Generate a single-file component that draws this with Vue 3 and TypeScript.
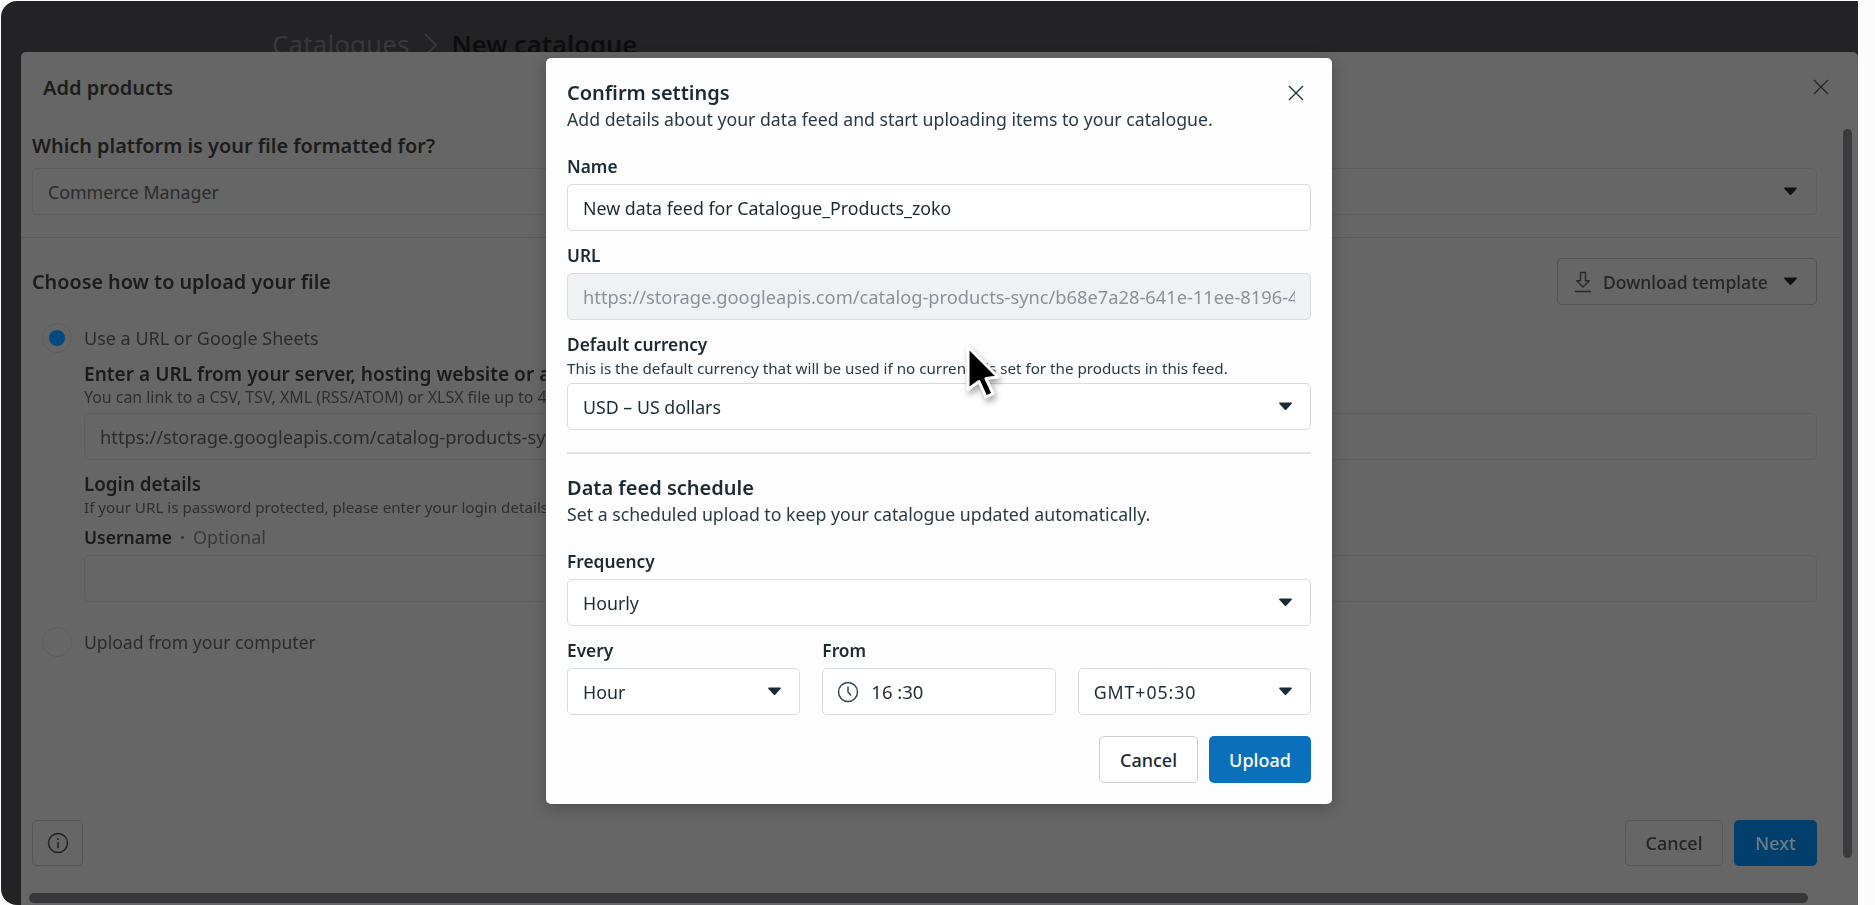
<script setup lang="ts">
const chevron = 'M.9 .6h11.2c.6 0 1 .7.6 1.200L7.200 7.700a1 1 0 0 1-1.400 0L.3 1.800C-.1 1.300.3.600.9.600z'
</script>

<template>
  <div class="page">
    <div class="frame">
      <div class="crumbs">
        <span class="crumb-link">Catalogues</span>
        <svg class="crumb-sep" width="16" height="26" viewBox="0 0 16 26"><path d="M2 2l11 11L2 24" fill="none" stroke="#3c3c3e" stroke-width="1.6" /></svg>
        <span class="crumb-now">New catalogue</span>
      </div>

      <section class="back">
        <div class="back-title">Add products</div>
        <svg class="back-close" width="16" height="16" viewBox="0 0 16 16"><path d="M1 1l14 14M15 1L1 15" stroke="#262626" stroke-width="1.3" fill="none" /></svg>

        <div class="back-body">
          <h2 class="back-h first">Which platform is your file formatted for?</h2>
          <div class="back-input select">
            <span>Commerce Manager</span>
            <svg width="13" height="9" viewBox="0 0 13 9"><path :d="chevron" fill="#111" /></svg>
          </div>
        </div>
        <div class="back-rule"></div>

        <div class="back-body">
          <div class="choose-row">
            <h2 class="back-h">Choose how to upload your file</h2>
            <div class="template-btn">
              <svg width="20" height="22" viewBox="0 0 20 22" fill="none" stroke="#2a2a2a" stroke-width="1.4" stroke-linejoin="round" stroke-linecap="round"><path d="M7.500 1.500h5v8.200h3.800L10 16 3.700 9.700h3.800zM2.500 20.500h15" /></svg>
              <span>Download template</span>
              <svg width="13" height="9" viewBox="0 0 13 9"><path :d="chevron" fill="#111" /></svg>
            </div>
          </div>

          <div class="radio-row">
            <span class="radio"><i></i></span>
            <span>Use a URL or Google Sheets</span>
          </div>

          <div class="indent">
            <div class="back-strong">Enter a URL from your server, hosting website or a Google Sheet</div>
            <div class="back-small wide">You can link to a CSV, TSV, XML (RSS/ATOM) or XLSX file up to 4 GB.</div>
            <div class="back-input url">https://storage.googleapis.com/catalog-products-sync/b68e7a28-641e-11ee-8196-4</div>
            <div class="back-login">Login details</div>
            <div class="back-small">If your URL is password protected, please enter your login details.</div>
            <div class="back-user"><b>Username</b><em>·</em><span>Optional</span></div>
            <div class="back-input url user"></div>
          </div>

          <div class="radio-row second">
            <span class="radio"></span>
            <span>Upload from your computer</span>
          </div>
        </div>

        <div class="back-foot">
          <div class="info-btn">
            <svg width="22" height="22" viewBox="0 0 22 22" fill="none" stroke="#232323" stroke-width="1.5"><circle cx="11" cy="11" r="9.500" /><path d="M11 10v6.200M11 6.200v1.800" /></svg>
          </div>
          <div class="foot-right">
            <div class="back-btn">Cancel</div>
            <div class="back-btn next">Next</div>
          </div>
        </div>

        <div class="bar-v"></div>
        <div class="bar-h"></div>
      </section>

      <section class="modal">
        <svg class="modal-close" width="16" height="16" viewBox="0 0 16 16"><path d="M1 1l14 14M15 1L1 15" stroke="#1c2b33" stroke-width="1.300" fill="none" /></svg>
        <h1 class="m-title">Confirm settings</h1>
        <p class="m-sub">Add details about your data feed and start uploading items to your catalogue.</p>

        <label class="m-label name">Name</label>
        <div class="m-input">New data feed for Catalogue_Products_zoko</div>

        <label class="m-label">URL</label>
        <div class="m-input disabled"><span>https://storage.googleapis.com/catalog-products-sync/b68e7a28-641e-11ee-8196-4</span></div>

        <label class="m-label">Default currency</label>
        <p class="m-help">This is the default currency that will be used if no currency is set for the products in this feed.</p>
        <div class="m-input select">
          <span>USD – US dollars</span>
          <svg width="13" height="9" viewBox="0 0 13 9"><path :d="chevron" fill="#1c2b33" /></svg>
        </div>

        <div class="m-rule"></div>

        <h2 class="m-title schedule">Data feed schedule</h2>
        <p class="m-sub">Set a scheduled upload to keep your catalogue updated automatically.</p>

        <label class="m-label freq">Frequency</label>
        <div class="m-input select">
          <span>Hourly</span>
          <svg width="13" height="9" viewBox="0 0 13 9"><path :d="chevron" fill="#1c2b33" /></svg>
        </div>

        <div class="m-triple">
          <div>
            <label class="m-label flat">Every</label>
            <div class="m-input select">
              <span>Hour</span>
              <svg width="13" height="9" viewBox="0 0 13 9"><path :d="chevron" fill="#1c2b33" /></svg>
            </div>
          </div>
          <div>
            <label class="m-label flat">From</label>
            <div class="m-input time">
              <svg width="22" height="22" viewBox="0 0 22 22" fill="none" stroke="#344854" stroke-width="1.500"><circle cx="11" cy="11" r="9.500" /><path d="M11 5.500V11l3 3.500" /></svg>
              <span>16 :30</span>
            </div>
          </div>
          <div class="tz">
            <div class="m-input select">
              <span class="gmt">GMT+05:30</span>
              <svg width="13" height="9" viewBox="0 0 13 9"><path :d="chevron" fill="#1c2b33" /></svg>
            </div>
          </div>
        </div>

        <div class="m-actions">
          <div class="m-btn">Cancel</div>
          <div class="m-btn primary">Upload</div>
        </div>
      </section>

      <svg class="cursor" width="44" height="58" viewBox="0 0 44 58">
        <path d="M6 3l30 30-12 1.500 7 15-7 3.500-7-15.500-11 8z" fill="#000" stroke="#fff" stroke-width="3" stroke-linejoin="round" />
      </svg>
    </div>
  </div>
</template>

<style>
html, body { margin: 0; background: #fff; }
</style>

<style scoped>
* { box-sizing: border-box; }
.page {
  width: 1875px;
  height: 905px;
  overflow: hidden;
  background: #fcfcfc;
  padding: 1px 0 0 1px;
  font-family: "Noto Sans", "Open Sans", sans-serif;
}
.frame {
  position: relative;
  width: 1857px;
  height: 904px;
  background: #232325;
  border-radius: 16px 0 0 16px;
  overflow: hidden;
}
.crumbs {
  height: 51px;
  overflow: hidden;
  padding: 27px 0 0 271px;
  display: flex;
  align-items: flex-start;
  gap: 13px;
  font-size: 26px;
  line-height: 32px;
  white-space: nowrap;
}
.crumb-link { color: #38383b; letter-spacing: .1px; }
.crumb-sep { margin-top: 4px; }
.crumb-now { color: #0d0d0d; font-weight: 600; font-size: 25.500px; }

.back {
  position: relative;
  margin-left: 20px;
  height: 853px;
  background: #666;
  border-radius: 5px 5px 0 0;
  display: flex;
  flex-direction: column;
  color: #202020;
  font-size: 17.500px;
  filter: blur(.5px);
}
.back-title {
  margin: 24px 0 0 22px;
  font-size: 20px;
  line-height: 24px;
  font-weight: 600;
  color: #1c1c1c;
}
.back-close { position: absolute; left: 1792px; top: 27px; }
.back-body { padding: 0 41px 0 11px; }
.back-h {
  margin: 0;
  font-size: 19.800px;
  line-height: 28px;
  font-weight: 600;
  color: #1c1c1c;
}
.back-h.first { margin-top: 32px; font-size: 19.900px; }
.back-input {
  height: 47px;
  margin-top: 8px;
  border: 1px solid #5e5e5e;
  border-radius: 5px;
  padding: 0 15px;
  display: flex;
  align-items: center;
  font-size: 17.800px;
  color: #2b2b2b;
}
.select { justify-content: space-between; }
.back-input.select { padding-right: 19px; }
.back-rule {
  height: 1px;
  margin: 22px 18px 0 0;
  background: #5b5b5b;
}
.choose-row {
  display: flex;
  align-items: center;
  justify-content: space-between;
  margin-top: 20px;
}
.template-btn {
  width: 260px;
  height: 47px;
  border: 1px solid #545454;
  border-radius: 5px;
  display: flex;
  align-items: center;
  padding: 0 19px 0 15px;
  gap: 10px;
  font-size: 17.500px;
  font-weight: 500;
  color: #252525;
}
.template-btn span { flex: 1; white-space: nowrap; }
.radio-row {
  margin: 18px 0 0 10px;
  display: flex;
  align-items: center;
  gap: 12px;
  height: 30px;
  font-size: 18px;
  color: #2b2b2b;
}
.radio-row.second { margin-top: 25px; font-size: 17.600px; }
.radio {
  width: 30px;
  height: 30px;
  border-radius: 50%;
  border: 1px solid #5d5d5d;
  display: flex;
  align-items: center;
  justify-content: center;
}
.radio i {
  width: 16px;
  height: 16px;
  border-radius: 50%;
  background: #034a80;
}
.indent { padding-left: 52px; }
.back-strong {
  margin-top: 9px;
  font-size: 19.100px;
  line-height: 24px;
  font-weight: 600;
  color: #1b1b1b;
  white-space: nowrap;
}
.back-small {
  margin-top: 2px;
  font-size: 15.200px;
  line-height: 18px;
  color: #2e2e2e;
  white-space: nowrap;
}
.back-small.wide { font-size: 15.900px; }
.back-input.url { margin-top: 7px; white-space: nowrap; font-size: 18.300px; }
.back-input.url.user { margin-top: 8px; }
.back-login {
  margin-top: 12px;
  font-size: 18.800px;
  line-height: 24px;
  font-weight: 600;
  color: #1b1b1b;
}
.back-user {
  margin-top: 11px;
  line-height: 20px;
  font-size: 17.500px;
  color: #3a3a3a;
  display: flex;
  gap: 8px;
}
.back-user b { font-weight: 600; color: #1b1b1b; }
.back-user em { font-style: normal; font-weight: 700; }
.back-user span { font-size: 18px; }
.back-foot {
  margin-top: auto;
  padding: 0 41px 39px 11px;
  display: flex;
  justify-content: space-between;
}
.info-btn {
  width: 51px;
  height: 46px;
  border: 1px solid #555;
  border-radius: 5px;
  display: flex;
  align-items: center;
  justify-content: center;
}
.foot-right { display: flex; gap: 11px; }
.back-btn {
  width: 98px;
  height: 46px;
  border: 1px solid #585858;
  border-radius: 5px;
  display: flex;
  align-items: center;
  justify-content: center;
  font-size: 18px;
  font-weight: 500;
  color: #232323;
}
.back-btn.next {
  width: 83px;
  border: 0;
  background: #033f6d;
  color: #6e7c87;
}
.bar-v {
  position: absolute;
  left: 1822px;
  top: 77px;
  width: 9px;
  height: 729px;
  border-radius: 5px;
  background: #3b3b3d;
}
.bar-h {
  position: absolute;
  left: 8px;
  top: 841px;
  width: 1779px;
  height: 10px;
  border-radius: 5px;
  background: #37373a;
}

.modal {
  position: absolute;
  left: 545px;
  top: 57px;
  width: 786px;
  height: 746px;
  padding: 23px 21px 20px 21px;
  background: #fdfdfd;
  border-radius: 5px;
  box-shadow: 0 4px 16px rgba(0, 0, 0, .25);
  color: #1c2b33;
  filter: blur(.3px);
}
.modal-close { position: absolute; left: 742px; top: 27px; }
.m-title {
  margin: 0;
  font-size: 20px;
  line-height: 24px;
  font-weight: 600;
}
.m-title.schedule { margin-top: 22px; }
.m-sub {
  margin: 3px 0 0;
  font-size: 17.700px;
  line-height: 22px;
  color: #293a44;
  white-space: nowrap;
}
.m-label {
  display: block;
  margin: 15px 0 7px;
  font-size: 17.300px;
  line-height: 20px;
  font-weight: 600;
}
.m-label.name { margin-top: 27px; }
.m-label.freq { margin-top: 27px; }
.m-label.flat { margin-top: 0; }
.m-help {
  margin: -3px 0 6px;
  font-size: 15.200px;
  line-height: 18px;
  color: #293a44;
  white-space: nowrap;
}
.m-input {
  height: 47px;
  border: 1px solid #d9dcde;
  border-radius: 5px;
  background: #fff;
  padding: 0 15px;
  display: flex;
  align-items: center;
  font-size: 17.800px;
  color: #1c2b33;
  white-space: nowrap;
}
.m-input.select { padding-right: 18px; }
.m-input.disabled {
  background: #eff1f3;
  color: #8a9399;
  font-size: 18.300px;
}
.m-input.disabled span {
  display: block;
  overflow: hidden;
  width: 100%;
}
.m-input.time { gap: 12px; padding-left: 14px; font-size: 18.500px; }
.gmt { letter-spacing: .9px; }
.m-rule {
  height: 2px;
  margin-top: 22px;
  background: #e2e4e6;
}
.m-triple {
  display: grid;
  grid-template-columns: repeat(3, 1fr);
  gap: 22px;
  margin-top: 15px;
}
.tz { padding-top: 27px; }
.m-actions {
  margin-top: 21px;
  display: flex;
  justify-content: flex-end;
  gap: 11px;
}
.m-btn {
  width: 99px;
  height: 47px;
  border: 1px solid #cbd0d3;
  border-radius: 5px;
  background: #fff;
  display: flex;
  align-items: center;
  justify-content: center;
  font-size: 18px;
  font-weight: 500;
}
.m-btn.primary {
  width: 102px;
  border: 0;
  background: #0a70bc;
  color: #fff;
}
.cursor {
  position: absolute;
  left: 961px;
  top: 343px;
  filter: drop-shadow(2px 4px 3px rgba(0, 0, 0, .35));
}
</style>
